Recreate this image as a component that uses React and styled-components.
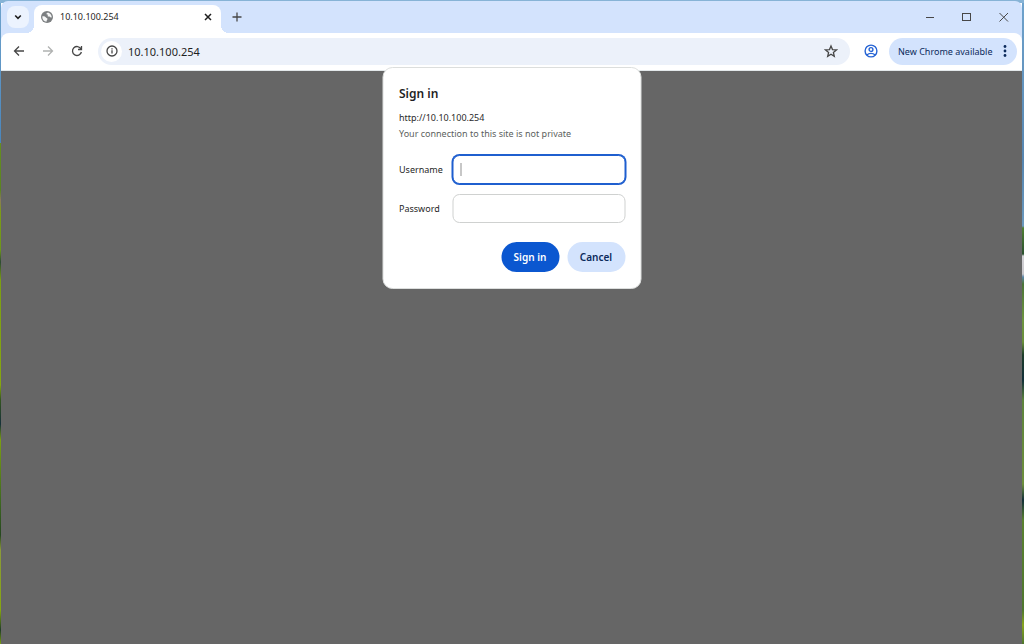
import React from "react";
import styled, { createGlobalStyle, css } from "styled-components";

const GlobalStyle = createGlobalStyle`
  *, *::before, *::after { box-sizing: border-box; }
  html, body, #root { height: 100%; }
  body {
    margin: 0;
    font-family: "Noto Sans", "Open Sans", sans-serif;
    font-size: 9px;
    color: #1f1f1f;
  }
  button, input { font: inherit; color: inherit; }
`;

const Desktop = styled.div`
  min-height: 100%;
  display: flex;
  padding: 1px 2px 0 1px;
  background:
    linear-gradient(#86b3d6, #86b3d6) top / 100% 3px no-repeat,
    linear-gradient(180deg, #6fa3cd 0, #4a86bc 143px, #668f20 143px, #5a8420 190px, #8b7a5a 200px, #7d9c15 212px, #6d961b 250px, #2c4a34 262px, #7c9f12 280px, #86a60f 385px, #33551f 400px, #16303a 424px, #7c9f12 440px, #3f6a20 500px, #26471f 535px, #8b9a3a 550px, #86a60f 610px, #1f3d26 630px, #7c9f12 644px) left / 1px 100% no-repeat,
    linear-gradient(180deg, #6fa3cd 0, #5685b0 160px, #6a98bd 226px, #4f7f33 228px, #2c5230 254px, #d3d2d6 256px, #c9c8cc 274px, #5c86a8 277px, #4c7438 284px, #6d9440 320px, #6a8f3a 342px, #1d3d2b 355px, #12303a 380px, #5d833c 400px, #6d8f3c 484px, #14303a 500px, #5a8130 520px, #4f772e 610px, #87a41f 625px, #4f772e 644px) right / 2px 100% no-repeat;
`;

const Window = styled.main`
  position: relative;
  flex: 1;
  min-width: 0;
  display: flex;
  flex-direction: column;
  border-radius: 7px 7px 0 0;
  background: #d3e3fd;
  overflow: hidden;
`;

const TabStrip = styled.header`
  display: flex;
  align-items: flex-end;
  height: 32px;
  padding-left: 6px;
`;

const IconButton = styled.button`
  display: flex;
  align-items: center;
  justify-content: center;
  flex: none;
  width: ${(p) => p.$width || 24}px;
  height: 24px;
  padding: 0;
  border: 0;
  border-radius: 8px;
  background: ${(p) => p.$fill || "transparent"};
  color: ${(p) => p.$color || "#474747"};
`;

const TabSearch = styled(IconButton)`
  width: 22px;
  height: 22px;
  margin-bottom: 5px;
`;

const Tab = styled.div`
  position: relative;
  display: flex;
  align-items: center;
  width: 187px;
  height: 28px;
  margin: 0 4px 0 5px;
  padding: 0 1px 5px 7px;
  border-radius: 8px 8px 0 0;
  background: #fff;

  &::before,
  &::after {
    content: "";
    position: absolute;
    bottom: 0;
    width: 8px;
    height: 8px;
  }
  &::before {
    right: 100%;
    background: radial-gradient(circle at 0 0, transparent 8px, #fff 8px);
  }
  &::after {
    left: 100%;
    background: radial-gradient(circle at 100% 0, transparent 8px, #fff 8px);
  }
`;

const TabTitle = styled.span`
  flex: 1;
  margin-left: 7px;
  line-height: 16px;
`;

const NewTab = styled(IconButton)`
  margin-bottom: 4px;
`;

const WindowControls = styled.div`
  display: flex;
  align-self: center;
  margin-left: auto;
`;

const Toolbar = styled.nav`
  display: flex;
  align-items: center;
  height: 38px;
  padding: 0 5px 1px 3px;
  border-bottom: 1px solid #e3e8ea;
  border-radius: 8px 8px 0 0;
  background: #fff;
`;

const AddressBar = styled.div`
  display: flex;
  align-items: center;
  flex: 1;
  min-width: 0;
  height: 27px;
  margin: 0 9px 0 7px;
  padding: 0 7px 0 3px;
  border-radius: 14px;
  background: #ecf1fa;
`;

const SiteInfo = styled(IconButton)`
  width: 21px;
  height: 21px;
  border-radius: 50%;
`;

const AddressInput = styled.input`
  flex: 1;
  min-width: 0;
  height: 24px;
  margin-left: 6px;
  padding: 0;
  border: 0;
  outline: 0;
  background: transparent;
  font-size: 11px;
`;

const UpdateButton = styled.button`
  display: flex;
  align-items: center;
  justify-content: space-between;
  flex: none;
  width: 128px;
  height: 27px;
  margin-left: 6px;
  padding: 0 10px 0 9px;
  border: 0;
  border-radius: 14px;
  background: #d3e3fd;
  color: #0b2a5c;
  white-space: nowrap;
`;

const Page = styled.section`
  flex: 1;
  background: #666;
`;

const Dialog = styled.form`
  position: absolute;
  top: 66px;
  left: 50%;
  width: 259px;
  margin: 0;
  padding: 16px 15px 16px 16px;
  border: 1px solid #dcdedd;
  border-radius: 10px;
  background: #fff;
  transform: translateX(-50%);
`;

const Title = styled.h1`
  margin: 0 0 6px;
  font-size: 12px;
  font-weight: 600;
  line-height: 20px;
`;

const Line = styled.p`
  margin: 0;
  line-height: 16px;
  color: ${(p) => (p.$muted ? "#5c5f5e" : "#2a2a2a")};
`;

const Fields = styled.div`
  display: grid;
  grid-template-columns: 53px 1fr;
  align-items: center;
  row-gap: 10px;
  margin-top: 13px;
`;

const focused = css`
  border-color: #1f5fcf;
  box-shadow: 0 0 0 1px #1f5fcf;
  background: linear-gradient(#8f8f8f, #8f8f8f) 7px center / 1px 13px no-repeat #fff;
`;

const TextField = styled.input`
  width: 100%;
  height: 29px;
  padding: 0 8px;
  border: 1px solid #cfd1d0;
  border-radius: 7px;
  outline: 0;
  background: #fff;
  ${(p) => p.$focused && focused}
`;

const Actions = styled.div`
  display: flex;
  justify-content: flex-end;
  gap: 8px;
  margin-top: 19px;
`;

const ActionButton = styled.button`
  width: 58px;
  height: 30px;
  padding: 0;
  border: 0;
  border-radius: 15px;
  font-size: 10px;
  font-weight: 600;
  background: ${(p) => (p.$primary ? "#0b57d0" : "#d3e3fd")};
  color: ${(p) => (p.$primary ? "#fff" : "#0b2a5c")};
`;

const Icon = ({ size = 12, box = 12, stroke = 1.3, children }) => (
  <svg width={size} height={size} viewBox={`0 0 ${box} ${box}`} fill="none" stroke="currentColor" strokeWidth={stroke} aria-hidden="true">
    {children}
  </svg>
);

const Globe = () => (
  <svg width="12" height="12" viewBox="0 0 24 24" aria-hidden="true">
    <circle cx="12" cy="12" r="12" fill="#7c7f81" />
    <path d="M2.500 11c2-1 6 0 7.500 2s3 1 3 3-2 2-2 5.500C6 21 2.300 17 2.500 11zM14 2.800c4 1 7.500 5 7.500 9.700-2 1-3 0-4-1s-3 .5-4-1 1-2 0-3-2.500 0-2.500-2 2-1.700 3-2.700z" fill="#f5f6f6" />
  </svg>
);

export default function App() {
  return (
    <Desktop>
      <GlobalStyle />
      <Window>
        <TabStrip>
          <TabSearch type="button" aria-label="Search tabs" $fill="#ecf3fe" $color="#1f1f1f">
            <Icon size={10} box={10} stroke={1.6}><path d="M2.200 3.500 5 6.300l2.800-2.800" /></Icon>
          </TabSearch>
          <Tab>
            <Globe />
            <TabTitle>10.10.100.254</TabTitle>
            <IconButton type="button" aria-label="Close tab" $color="#1f1f1f">
              <Icon size={10} box={10} stroke={1.5}><path d="m2 2 6 6M8 2 2 8" /></Icon>
            </IconButton>
          </Tab>
          <NewTab type="button" aria-label="New tab">
            <Icon><path d="M6 1.500v9M1.500 6h9" /></Icon>
          </NewTab>
          <WindowControls>
            <IconButton type="button" aria-label="Minimize" $width={37}>
              <Icon stroke={1}><path d="M2 6.500h8" /></Icon>
            </IconButton>
            <IconButton type="button" aria-label="Maximize" $width={37}>
              <Icon stroke={1}><rect x="1.500" y="2.500" width="8" height="7" /></Icon>
            </IconButton>
            <IconButton type="button" aria-label="Close" $width={37}>
              <Icon stroke={1}><path d="m1.500 2 8.500 8.500M10 2 1.500 10.500" /></Icon>
            </IconButton>
          </WindowControls>
        </TabStrip>

        <Toolbar>
          <IconButton type="button" aria-label="Back" $width={29}>
            <Icon><path d="M11 6H1.500M6 1.500 1.500 6 6 10.500" /></Icon>
          </IconButton>
          <IconButton type="button" aria-label="Forward" $width={29} $color="#b0b2b1">
            <Icon><path d="M1 6h9.500M6 1.500 10.500 6 6 10.500" /></Icon>
          </IconButton>
          <IconButton type="button" aria-label="Reload" $width={29}>
            <Icon><path d="M10 3.900A4.500 4.500 0 1 0 10.400 7M10.500 1v3.500H7" /></Icon>
          </IconButton>
          <AddressBar>
            <SiteInfo type="button" aria-label="View site information" $fill="#fff">
              <Icon><circle cx="6" cy="6" r="5" /><path d="M6 5.300v3.300M6 3.200v1.300" /></Icon>
            </SiteInfo>
            <AddressInput aria-label="Address" defaultValue="10.10.100.254" />
            <IconButton type="button" aria-label="Bookmark this page">
              <Icon size={14} box={14} stroke={1.3}>
                <path d="m7 2 1.500 3.600 3.900.3-3 2.500.9 3.900L7 10.200l-3.300 2.100.9-3.900-3-2.500 3.900-.3z" />
              </Icon>
            </IconButton>
          </AddressBar>
          <IconButton type="button" aria-label="Profile" $color="#2563d4">
            <Icon size={14} box={14} stroke={1.4}>
              <circle cx="7" cy="7" r="5.900" />
              <circle cx="7" cy="5.500" r="1.900" />
              <path d="M2.900 11c2.200-2.200 6-2.200 8.200 0" />
            </Icon>
          </IconButton>
          <UpdateButton type="button">
            New Chrome available
            <svg width="4" height="14" viewBox="0 0 4 14" fill="currentColor" aria-hidden="true">
              <circle cx="2" cy="2.500" r="1.400" />
              <circle cx="2" cy="7" r="1.400" />
              <circle cx="2" cy="11.500" r="1.400" />
            </svg>
          </UpdateButton>
        </Toolbar>

        <Page />

        <Dialog role="dialog" aria-labelledby="dialog-title" onSubmit={(e) => e.preventDefault()}>
          <Title id="dialog-title">Sign in</Title>
          <Line>http://10.10.100.254</Line>
          <Line $muted>Your connection to this site is not private</Line>
          <Fields>
            <label htmlFor="username">Username</label>
            <TextField id="username" type="text" $focused />
            <label htmlFor="password">Password</label>
            <TextField id="password" type="password" />
          </Fields>
          <Actions>
            <ActionButton type="submit" $primary>Sign in</ActionButton>
            <ActionButton type="button">Cancel</ActionButton>
          </Actions>
        </Dialog>
      </Window>
    </Desktop>
  );
}
